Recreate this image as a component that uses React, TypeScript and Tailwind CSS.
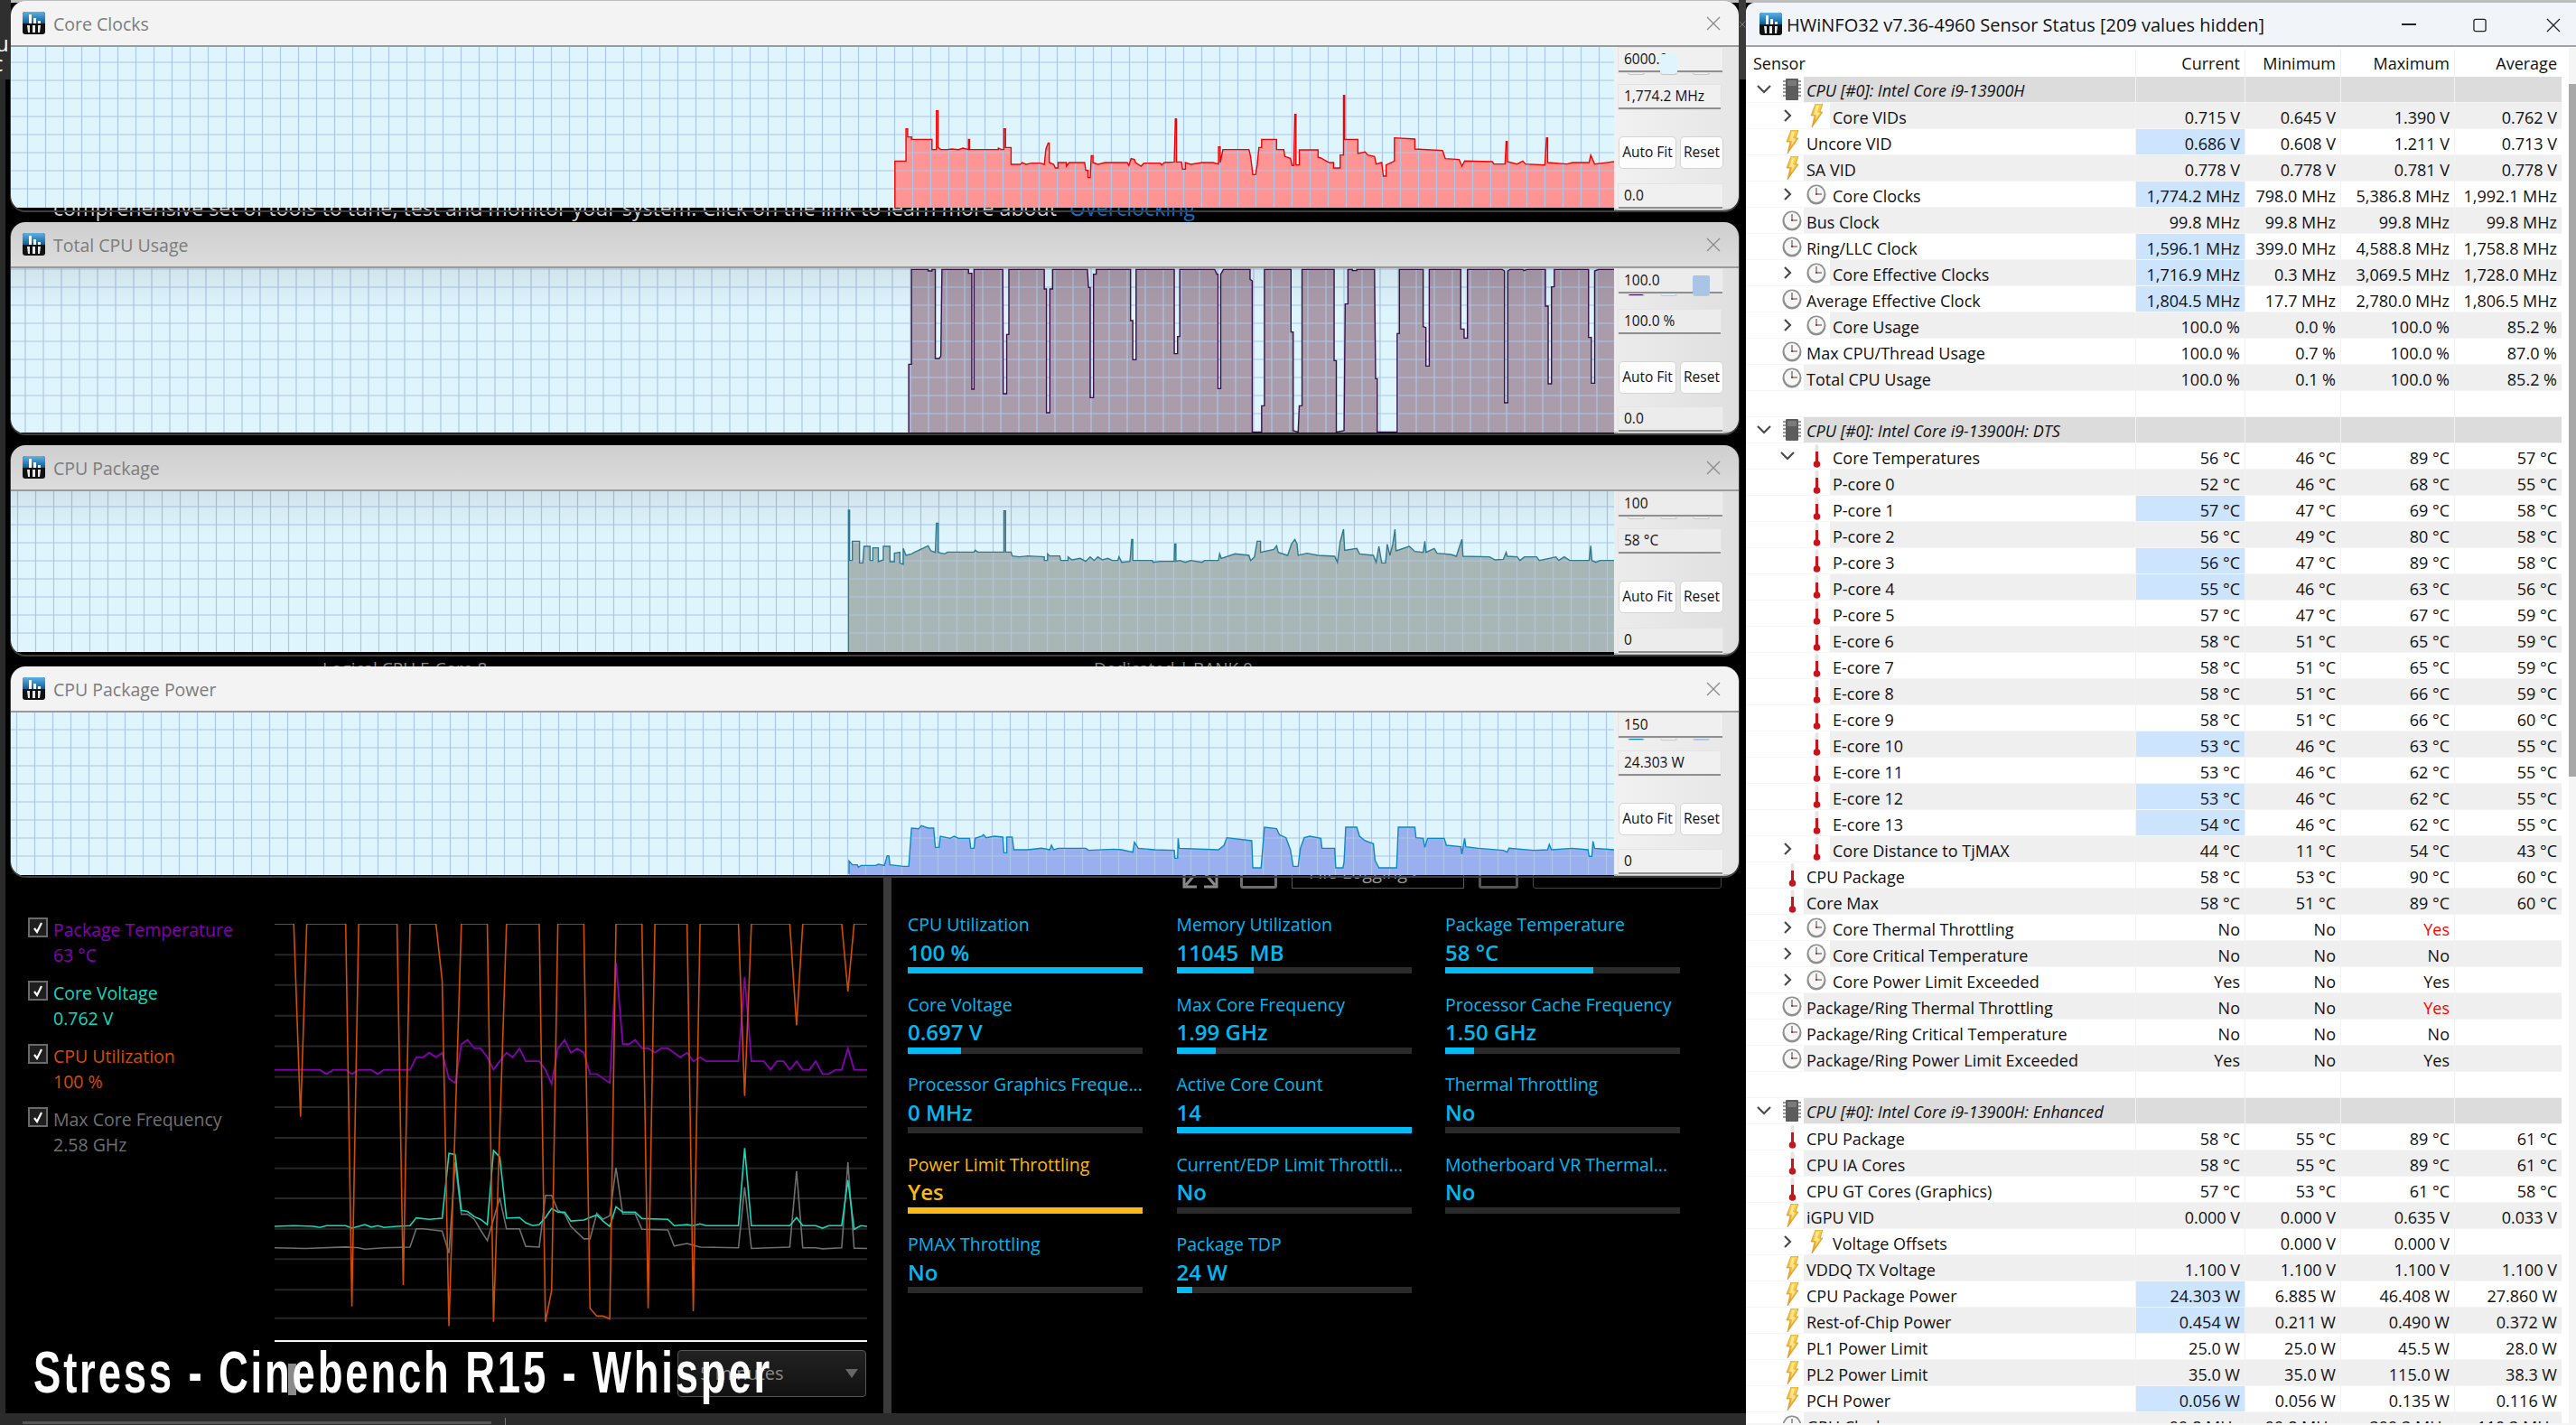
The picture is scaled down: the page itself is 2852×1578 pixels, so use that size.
import React from "react";

const F = "font-['Open_Sans',sans-serif]";

const clocks = "-15,690 -15,535 5,535 5,428 8,428 8,455 15,455 15,463 52,463 52,497 60,497 60,368 63,368 63,490 68,497 80,497 88,495 100,497 108,492 118,497 118,463 120,463 120,497 172,497 172,492 178,497 182,497 182,428 185,428 185,490 195,490 195,546 212,546 215,540 222,546 232,542 248,542 255,546 258,495 262,475 264,475 264,540 272,546 275,558 280,558 280,540 295,540 295,552 300,540 328,540 330,566 334,566 334,590 338,590 340,517 343,517 343,540 352,546 365,540 405,540 408,550 412,527 418,530 420,540 430,552 435,542 465,542 467,548 472,540 490,538 492,395 494,395 494,538 503,538 505,562 510,562 510,540 520,546 540,540 560,540 570,545 570,488 573,488 573,540 578,497 625,497 628,520 632,580 637,580 640,548 643,490 648,490 648,463 675,463 675,497 688,497 690,520 700,526 703,550 706,550 708,380 710,380 710,548 716,548 716,498 750,498 750,522 755,525 770,540 778,540 778,558 790,558 790,515 796,515 796,317 798,317 798,463 822,463 822,510 835,505 840,515 852,520 855,545 865,540 868,585 873,585 873,548 888,535 888,458 925,462 925,495 975,500 980,527 1005,530 1010,552 1015,535 1065,537 1068,545 1088,545 1090,470 1092,470 1092,537 1110,545 1120,535 1125,545 1160,548 1163,458 1165,458 1165,540 1200,545 1210,540 1240,540 1243,515 1250,545 1285,537";
const usage = "10,1433 10,1207 15,1207 15,892 45,892 45,897 52,897 52,892 58,892 58,1188 65,1188 68,1180 70,892 118,892 118,905 124,905 124,1290 128,1290 128,892 180,892 181,1305 187,1305 187,1108 191,1108 191,892 255,892 255,957 259,957 259,1368 265,1368 265,957 270,957 270,892 333,892 335,952 338,952 338,1318 344,1318 344,908 349,908 349,892 411,892 411,1062 415,1062 415,1192 421,1192 421,892 490,892 490,1172 496,1172 496,1115 500,1115 500,892 563,892 567,908 569,908 569,1288 574,1288 574,908 579,892 627,892 627,925 631,930 631,1432 648,1432 648,1345 653,1345 653,892 701,892 701,1100 705,1100 705,1428 714,1432 716,1345 721,1345 721,892 779,892 779,1195 783,1195 783,1432 797,1428 799,1007 804,1007 804,892 812,892 812,896 820,896 820,892 852,892 854,1255 857,1255 857,1432 893,1432 893,1105 897,1105 897,892 940,892 940,1082 945,1085 945,1213 951,1213 951,892 1008,892 1008,1090 1014,1090 1014,1120 1020,1120 1020,892 1083,892 1087,897 1087,1335 1093,1335 1093,897 1097,892 1120,892 1122,896 1128,892 1161,892 1161,1014 1166,1014 1166,1272 1172,1272 1172,950 1177,950 1177,892 1239,892 1239,1118 1244,1118 1244,1270 1250,1270 1250,897 1257,892 1285,892";
const pkg = "-99,695 -99,225 -97,225 -97,392 -92,392 -92,328 -79,328 -79,400 -73,400 -71,345 -60,345 -60,392 -55,392 -55,350 -45,350 -45,396 -36,390 -36,345 -24,345 -24,396 -16,396 -16,368 -6,365 -6,400 0,405 0,352 5,375 15,370 20,365 35,352 45,343 50,360 58,365 60,268 63,268 63,365 75,370 80,364 128,364 130,358 135,364 182,364 182,227 185,227 185,364 195,364 197,377 210,380 225,377 255,380 255,392 261,392 261,370 265,377 283,377 285,392 298,392 298,380 305,390 320,385 330,395 338,380 345,392 352,380 360,390 370,385 378,392 388,392 390,380 395,398 410,395 413,322 415,322 415,392 450,392 452,398 465,395 490,395 491,337 493,337 493,395 500,392 510,398 520,392 540,398 545,392 570,392 572,370 575,385 600,370 625,375 628,392 635,380 640,328 646,328 646,365 670,355 675,343 678,365 695,375 702,337 708,322 712,337 714,375 730,368 750,375 780,378 785,398 790,330 796,288 798,358 820,352 825,370 850,375 855,398 860,345 865,400 872,400 875,338 880,375 885,338 889,288 891,360 915,345 925,362 940,365 943,328 945,365 960,352 965,368 990,372 1000,378 1010,322 1012,378 1060,380 1070,390 1085,388 1090,365 1092,378 1110,380 1115,392 1123,380 1145,380 1150,392 1180,380 1185,392 1195,380 1205,392 1240,392 1243,343 1245,392 1252,398 1260,392 1285,392";
const power = "-98,1430 -98,1387 -92,1400 -83,1400 -81,1408 -76,1402 -50,1402 -45,1398 -34,1402 -29,1370 -26,1370 -24,1400 -13,1402 0,1405 10,1405 15,1278 28,1280 33,1270 45,1278 55,1278 58,1342 65,1342 67,1305 85,1312 92,1305 100,1312 120,1312 122,1345 128,1345 130,1312 142,1305 145,1300 150,1310 165,1305 180,1308 182,1360 187,1360 187,1308 197,1308 200,1350 225,1350 250,1345 265,1350 268,1335 272,1350 280,1345 330,1345 335,1352 380,1348 395,1350 415,1358 418,1325 425,1345 455,1350 490,1352 491,1378 496,1378 497,1312 499,1345 570,1350 580,1335 585,1310 630,1320 632,1410 647,1410 653,1275 675,1280 680,1300 692,1310 700,1350 705,1405 714,1405 718,1345 725,1310 735,1305 755,1312 757,1345 780,1345 782,1410 795,1410 797,1390 800,1275 820,1275 825,1305 835,1320 850,1330 853,1385 860,1410 892,1410 895,1275 925,1275 927,1310 940,1312 943,1342 948,1312 978,1312 982,1335 1008,1340 1010,1365 1015,1312 1017,1340 1040,1345 1085,1352 1092,1358 1095,1345 1140,1352 1165,1350 1168,1332 1172,1350 1210,1345 1238,1350 1240,1372 1245,1372 1247,1322 1250,1345 1285,1350";

const orange = "486,160 520,160 532,702 543,160 612,160 623,1235 635,160 703,160 714,1175 726,160 772,160 783,320 795,1290 817,160 863,160 874,1278 897,160 955,160 966,1278 977,1190 988,160 1034,160 1045,1240 1057,1262 1068,1262 1080,1270 1091,160 1137,160 1148,1240 1160,160 1217,160 1228,1248 1240,160 1308,160 1319,644 1331,160 1399,160 1411,445 1422,160 1491,160 1502,350 1513,160 1536,160";
const purple = "486,570 566,570 578,582 590,570 612,570 623,582 635,570 657,570 669,582 680,570 726,570 737,535 749,535 760,522 772,535 783,522 795,595 806,607 817,498 828,486 840,510 851,510 863,535 874,570 885,546 897,522 908,535 920,510 931,546 955,546 966,570 977,610 988,510 1000,486 1011,522 1022,510 1034,522 1045,582 1057,582 1080,607 1091,270 1103,498 1114,498 1125,486 1137,510 1148,510 1160,522 1171,510 1183,510 1194,522 1205,535 1217,522 1228,546 1240,535 1251,546 1308,546 1319,310 1331,546 1353,546 1365,570 1376,546 1388,546 1399,570 1411,546 1422,570 1434,570 1445,546 1457,582 1468,582 1480,570 1491,570 1502,510 1513,570 1536,570";
const teal = "486,1010 520,1008 555,1010 566,1013 578,1008 612,1008 623,1015 635,1010 646,1005 657,1012 669,1008 680,1013 703,1010 726,1008 737,986 760,990 783,987 795,805 806,808 817,965 828,968 840,983 851,990 863,1005 874,797 885,815 897,987 920,985 931,1000 944,1008 955,1005 966,985 977,960 988,970 1000,970 1011,995 1034,992 1045,985 1057,978 1068,995 1080,1010 1091,955 1103,970 1125,970 1137,988 1183,990 1194,1008 1217,1005 1228,1008 1240,1003 1251,1008 1308,1008 1319,790 1331,1008 1399,1008 1411,985 1422,1008 1445,1008 1457,1015 1468,1008 1491,1008 1502,880 1513,1018 1525,1008 1536,1010";
const grey = "486,1070 540,1072 612,1068 635,1070 646,1074 680,1070 726,1068 737,1017 749,1017 783,1023 795,1085 806,830 817,976 828,976 840,990 851,1020 863,1050 885,930 897,1017 920,1017 931,1066 955,1068 966,923 977,923 988,965 1000,975 1011,1010 1034,1045 1045,1045 1057,973 1068,990 1080,980 1091,845 1103,975 1125,975 1137,1018 1183,1020 1194,1065 1217,1058 1240,1068 1308,1070 1319,900 1331,1072 1399,1068 1411,855 1422,1070 1445,1070 1457,1073 1491,1070 1502,830 1513,1071 1536,1072";

function HwIcon({ cls }: { cls: string }) {
  return (
    <svg viewBox="0 0 25 25" className={cls}>
      <rect width="25" height="25" rx="3" fill="#111" />
      <defs>
        <linearGradient id="hwi" x1="0" y1="0" x2="0" y2="1">
          <stop offset="0" stopColor="#5fb2e6" />
          <stop offset="1" stopColor="#0b5d96" />
        </linearGradient>
      </defs>
      <path d="M0 3a3 3 0 0 1 3-3h19a3 3 0 0 1 3 3v10H0z" fill="url(#hwi)" />
      <path d="M7 3h3v10H7zM12 7h3v6h-3zM17 10h3v3h-3z" fill="#fff" />
      <path d="M5 15h3v8H6zM11 15h3v8h-3zM17 15h3l-1 8h-2z" fill="#e8e8e8" />
    </svg>
  );
}

function X({ cls, color }: { cls: string; color: string }) {
  return (
    <svg viewBox="0 0 16 16" className={cls} fill="none" stroke={color} strokeWidth="1.3">
      <path d="M1 1l14 14M15 1L1 15" />
    </svg>
  );
}

type W = {
  pos: string;
  title: string;
  titleBg: string;
  panelBg: string;
  boxBg: string;
  plotH: string;
  plotTop: number;
  h: number;
  offX: number;
  data: string;
  yo: number;
  fill: string;
  stroke: string;
  shade: boolean;
  max: string;
  cur: string;
  min: string;
  gap: string;
  sw: string[];
  big: number;
};

const windows: W[] = [
  { pos: "top-[1px] h-[232px]", title: "Core Clocks", titleBg: "bg-[#f3f3f3]", panelBg: "bg-linear-to-r from-[#f1f1f1] to-[#e6e6e6]", boxBg: "bg-[#f0f0f0]", plotH: "h-[178px]", plotTop: 52, h: 178, offX: 10.5, data: clocks, yo: 0, fill: "#ff9494", stroke: "#f00000", shade: false, max: "6000.0", cur: "1,774.2 MHz", min: "0.0", gap: "mt-[11px]", sw: ["#f0f0f0", "#dff5fd", "#f0f0f0"], big: 1 },
  { pos: "top-[246px] h-[234px]", title: "Total CPU Usage", titleBg: "bg-linear-to-b from-[#cfcfcf] to-[#dcdcdc]", panelBg: "bg-linear-to-r from-[#ececec] to-[#dfdfdf]", boxBg: "bg-[#ececec]", plotH: "h-[182px]", plotTop: 296, h: 182, offX: 8, data: usage, yo: 0, fill: "#ab9cab", stroke: "#38104a", shade: true, max: "100.0", cur: "100.0 %", min: "0.0", gap: "mt-[15px]", sw: ["#3c0a52", "#dff5fd", "#a9c4e4"], big: 2 },
  { pos: "top-[493px] h-[232px]", title: "CPU Package", titleBg: "bg-linear-to-b from-[#cfcfcf] to-[#dcdcdc]", panelBg: "bg-linear-to-r from-[#ececec] to-[#dfdfdf]", boxBg: "bg-[#ececec]", plotH: "h-[178px]", plotTop: 544, h: 178, offX: 19.5, data: pkg, yo: 490, fill: "#a8b6b6", stroke: "#2f7a92", shade: true, max: "100", cur: "58 °C", min: "0", gap: "mt-[11px]", sw: ["#f0f0f0", "#f0f0f0", "#f0f0f0"], big: -1 },
  { pos: "top-[738px] h-[232px]", title: "CPU Package Power", titleBg: "bg-[#f3f3f3]", panelBg: "bg-linear-to-r from-[#f1f1f1] to-[#e6e6e6]", boxBg: "bg-[#f0f0f0]", plotH: "h-[180px]", plotTop: 788, h: 180, offX: 18.5, data: power, yo: 490, fill: "#9ab0ee", stroke: "#0a8abf", shade: false, max: "150", cur: "24.303 W", min: "0", gap: "mt-[12px]", sw: ["#0a8abf", "#f4f4f4", "#a9c4e4"], big: -1 },
];

function Plot({ w, i }: { w: W; i: number }) {
  let d = "";
  for (let x = w.offX; x < 1787; x += 20) d += `M${x} ${w.plotTop}V${w.plotTop + w.h}`;
  for (let y = w.plotTop + w.h - 21; y > w.plotTop; y -= 20) d += `M12 ${y}H1787`;
  const first = w.data.split(" ")[0].split(",")[0];
  const last = w.data.split(" ").slice(-1)[0].split(",")[0];
  const base = w.yo === 0 ? (w.plotTop + w.h) * 3 : (w.plotTop + w.h - 490) * 3;
  const poly = `${first},${base} ${w.data} ${last},${base}`;
  const tr = `translate(1000 ${w.yo}) scale(0.6124 0.33333)`;
  return (
    <svg viewBox={`12 ${w.plotTop} 1775 ${w.h}`} preserveAspectRatio="none" className={`block w-[1775px] ${w.plotH} shrink-0`}>
      <defs>
        <linearGradient id={`sh${i}`} x1="0" y1="0" x2="0" y2="1">
          <stop offset="0" stopColor="#000" stopOpacity="0.07" />
          <stop offset="1" stopColor="#000" stopOpacity="0" />
        </linearGradient>
      </defs>
      <rect x="12" y={w.plotTop} width="1775" height={w.h} fill="#dff5fd" />
      <polygon points={poly} fill={w.fill} transform={tr} />
      <path d={d} stroke="#abc6e6" strokeWidth="1.2" fill="none" />
      <polyline points={w.data} fill="none" stroke={w.stroke} strokeWidth="1.4" vectorEffect="non-scaling-stroke" transform={tr} />
      {w.shade && <rect x="12" y={w.plotTop} width="1775" height="50" fill={`url(#sh${i})`} />}
    </svg>
  );
}

function Box({ cls, text, bg }: { cls: string; text: string; bg: string }) {
  return (
    <div className={`${cls} ${bg} h-[27px] shrink-0 border-b-2 border-[#8f8f8f] pl-[6px] flex items-center text-[#111] text-[15.5px] leading-none shadow-[0_0_0_1px_#e4e4e4]`}>
      {text}
    </div>
  );
}

function GraphWindow({ w, i }: { w: W; i: number }) {
  return (
    <div className={`absolute left-[12px] w-[1913px] ${w.pos} rounded-[16px] overflow-hidden flex flex-col shadow-[0_1px_0_1px_#3d3d3d] z-10 ${F}`}>
      <div className={`${w.titleBg} h-[51px] shrink-0 border-b-2 border-[#9a9a9a] flex items-center pl-[13px] pr-[20px]`}>
        <HwIcon cls="w-[25px] h-[25px]" />
        <span className="ml-[9px] pt-[2px] text-[#7c7c7c] text-[19.5px]">{w.title}</span>
        <X cls="ml-auto w-[16px] h-[16px]" color="#8a8a8a" />
      </div>
      <div className="flex flex-1 min-h-0">
        <Plot w={w} i={i} />
        <div className={`${w.panelBg} flex-1 pl-[5px] flex flex-col border-b-2 border-[#b8b8b8] relative`}>
          <Box cls="w-[115px] relative z-10 mt-[1px]" text={w.max} bg={w.boxBg} />
          <div className="flex justify-between w-[91px] ml-[10px] h-[3px] shrink-0">
            {w.sw.map((c, k) => (
              <span key={k} className="w-[19px] h-[3px] rounded-b-[3px] border border-t-0 border-[#c6c6c6] relative" style={{ background: c }}>
                {k === w.big && <span className="absolute -top-[20px] -left-[1px] w-[19px] h-[21px] rounded-[2px] z-20" style={{ background: c }} />}
              </span>
            ))}
          </div>
          <Box cls={`w-[113px] ${w.gap}`} text={w.cur} bg={w.boxBg} />
          <div className="flex gap-[4px] mt-[30px] shrink-0">
            <div className="w-[64px] h-[36px] rounded-[5px] bg-[#fdfdfd] border border-[#d4d4d4] flex items-center justify-center text-[#111] text-[15.5px] leading-none">Auto Fit</div>
            <div className="w-[48px] h-[36px] rounded-[5px] bg-[#fdfdfd] border border-[#d4d4d4] flex items-center justify-center text-[#111] text-[15.5px] leading-none">Reset</div>
          </div>
          <Box cls="w-[115px] mt-auto" text={w.min} bg={w.boxBg} />
        </div>
      </div>
    </div>
  );
}

function Volt({ cls = "" }: { cls?: string }) {
  return (
    <svg viewBox="0 0 14 26" className={`w-[14px] h-[26px] ${cls}`}>
      <defs>
        <linearGradient id="vg" x1="0" y1="0" x2="0" y2="1">
          <stop offset="0" stopColor="#fcd649" />
          <stop offset="1" stopColor="#ef9a13" />
        </linearGradient>
      </defs>
      <path d="M6 0h8l-3 9h3L2 26l3-13H1z" fill="url(#vg)" stroke="#c9851b" strokeWidth="0.6" />
      <path d="M7 2h3L8 9l3 1-5 8 1-6H4z" fill="#fff3b5" opacity="0.7" />
    </svg>
  );
}
function Clock() {
  return (
    <svg viewBox="0 0 22 24" className="w-[22px] h-[24px]">
      <ellipse cx="11" cy="12.5" rx="10.5" ry="11" fill="#8f8f8f" />
      <ellipse cx="11" cy="12" rx="8.5" ry="9" fill="#f6f6f6" />
      <path d="M11 12V5M11 12h6" stroke="#444" strokeWidth="1" fill="none" />
      <circle cx="11" cy="12" r="1.1" fill="#b02020" />
    </svg>
  );
}
function Therm() {
  return (
    <svg viewBox="0 0 9 26" className="w-[9px] h-[26px]">
      <rect x="2.5" y="0" width="4" height="22" rx="2" fill="#e9e4e4" />
      <rect x="3" y="8" width="3" height="14" fill="#c4161c" />
      <circle cx="4.5" cy="22" r="3.8" fill="#c4161c" />
    </svg>
  );
}
function Chip() {
  return (
    <svg viewBox="0 0 20 24" className="w-[20px] h-[24px]">
      <rect x="3" y="0" width="14" height="24" rx="1" fill="#5c5c5c" />
      <path d="M0 3h3M0 7h3M0 11h3M0 15h3M0 19h3M17 3h3M17 7h3M17 11h3M17 15h3M17 19h3" stroke="#9c9c9c" strokeWidth="2" />
      <rect x="5" y="2" width="10" height="6" fill="#7a7a7a" />
    </svg>
  );
}
function ChevR() {
  return (
    <svg viewBox="0 0 10 14" className="w-[10px] h-[14px]" fill="none" stroke="#4a4a4a" strokeWidth="2.2">
      <path d="M2 1l6 6-6 6" />
    </svg>
  );
}
function ChevD() {
  return (
    <svg viewBox="0 0 16 10" className="w-[16px] h-[10px]" fill="none" stroke="#4a4a4a" strokeWidth="2.2">
      <path d="M1 1l7 7 7-7" />
    </svg>
  );
}

type Row = { t: "g" | "0" | "1" | "e"; n?: string; ic?: "v" | "c" | "h"; ch?: "r" | "d"; v?: string[]; hi?: boolean; red?: boolean };
const mk = (t: Row["t"], ic: Row["ic"], n: string, v: string, opts: Partial<Row> = {}): Row => ({ t, ic, n, v: v.split("|"), ...opts });
const G = (n: string): Row => ({ t: "g", n });
const E: Row = { t: "e" };
const hi = { hi: true };
const temp = (n: string, a: string, b: string, c: string, d: string, o: Partial<Row> = {}) => mk("1", "h", n, `${a} °C|${b} °C|${c} °C|${d} °C`, o);
const temp0 = (n: string, a: string, b: string, c: string, d: string) => mk("0", "h", n, `${a} °C|${b} °C|${c} °C|${d} °C`);

const rows: Row[] = [
  G("CPU [#0]: Intel Core i9-13900H"),
  mk("1", "v", "Core VIDs", "0.715 V|0.645 V|1.390 V|0.762 V", { ch: "r" }),
  mk("0", "v", "Uncore VID", "0.686 V|0.608 V|1.211 V|0.713 V", hi),
  mk("0", "v", "SA VID", "0.778 V|0.778 V|0.781 V|0.778 V"),
  mk("1", "c", "Core Clocks", "1,774.2 MHz|798.0 MHz|5,386.8 MHz|1,992.1 MHz", { ch: "r", hi: true }),
  mk("0", "c", "Bus Clock", "99.8 MHz|99.8 MHz|99.8 MHz|99.8 MHz"),
  mk("0", "c", "Ring/LLC Clock", "1,596.1 MHz|399.0 MHz|4,588.8 MHz|1,758.8 MHz", hi),
  mk("1", "c", "Core Effective Clocks", "1,716.9 MHz|0.3 MHz|3,069.5 MHz|1,728.0 MHz", { ch: "r", hi: true }),
  mk("0", "c", "Average Effective Clock", "1,804.5 MHz|17.7 MHz|2,780.0 MHz|1,806.5 MHz", hi),
  mk("1", "c", "Core Usage", "100.0 %|0.0 %|100.0 %|85.2 %", { ch: "r" }),
  mk("0", "c", "Max CPU/Thread Usage", "100.0 %|0.7 %|100.0 %|87.0 %"),
  mk("0", "c", "Total CPU Usage", "100.0 %|0.1 %|100.0 %|85.2 %"),
  E,
  G("CPU [#0]: Intel Core i9-13900H: DTS"),
  temp("Core Temperatures", "56", "46", "89", "57", { ch: "d" }),
  temp("P-core 0", "52", "46", "68", "55"),
  temp("P-core 1", "57", "47", "69", "58", hi),
  temp("P-core 2", "56", "49", "80", "58"),
  temp("P-core 3", "56", "47", "89", "58", hi),
  temp("P-core 4", "55", "46", "63", "56", hi),
  temp("P-core 5", "57", "47", "67", "59"),
  temp("E-core 6", "58", "51", "65", "59"),
  temp("E-core 7", "58", "51", "65", "59"),
  temp("E-core 8", "58", "51", "66", "59"),
  temp("E-core 9", "58", "51", "66", "60"),
  temp("E-core 10", "53", "46", "63", "55", hi),
  temp("E-core 11", "53", "46", "62", "55"),
  temp("E-core 12", "53", "46", "62", "55", hi),
  temp("E-core 13", "54", "46", "62", "55", hi),
  temp("Core Distance to TjMAX", "44", "11", "54", "43", { ch: "r" }),
  temp0("CPU Package", "58", "53", "90", "60"),
  temp0("Core Max", "58", "51", "89", "60"),
  mk("1", "c", "Core Thermal Throttling", "No|No|Yes|", { ch: "r", red: true }),
  mk("1", "c", "Core Critical Temperature", "No|No|No|", { ch: "r" }),
  mk("1", "c", "Core Power Limit Exceeded", "Yes|No|Yes|", { ch: "r" }),
  mk("0", "c", "Package/Ring Thermal Throttling", "No|No|Yes|", { red: true }),
  mk("0", "c", "Package/Ring Critical Temperature", "No|No|No|"),
  mk("0", "c", "Package/Ring Power Limit Exceeded", "Yes|No|Yes|"),
  E,
  G("CPU [#0]: Intel Core i9-13900H: Enhanced"),
  temp0("CPU Package", "58", "55", "89", "61"),
  temp0("CPU IA Cores", "58", "55", "89", "61"),
  temp0("CPU GT Cores (Graphics)", "57", "53", "61", "58"),
  mk("0", "v", "iGPU VID", "0.000 V|0.000 V|0.635 V|0.033 V"),
  mk("1", "v", "Voltage Offsets", "|0.000 V|0.000 V|", { ch: "r" }),
  mk("0", "v", "VDDQ TX Voltage", "1.100 V|1.100 V|1.100 V|1.100 V"),
  mk("0", "v", "CPU Package Power", "24.303 W|6.885 W|46.408 W|27.860 W", hi),
  mk("0", "v", "Rest-of-Chip Power", "0.454 W|0.211 W|0.490 W|0.372 W", hi),
  mk("0", "v", "PL1 Power Limit", "25.0 W|25.0 W|45.5 W|28.0 W"),
  mk("0", "v", "PL2 Power Limit", "35.0 W|35.0 W|115.0 W|38.3 W"),
  mk("0", "v", "PCH Power", "0.056 W|0.056 W|0.135 W|0.116 W", hi),
  mk("0", "c", "GPU Clock", "99.8 MHz|99.8 MHz|399.3 MHz|110.3 MHz"),
];

const cellW = ["w-[121px]", "w-[106px]", "w-[126px]", "w-[119px]"];

function Icon({ k }: { k?: Row["ic"] }) {
  if (k === "v") return <Volt />;
  if (k === "c") return <Clock />;
  if (k === "h") return <Therm />;
  return null;
}

function SensorRow({ r, odd }: { r: Row; odd: boolean }) {
  const bg = r.t === "g" ? "bg-[#dcdcdc]" : odd ? "bg-[#efefef]" : "bg-white";
  const gut = r.t === "1" ? "w-[93px]" : "w-[64px]";
  return (
    <div className="flex h-[29px] shrink-0">
      <div className="flex w-[431px] shrink-0 border-b border-[#f6f6f6]">
        <div className={`${gut} shrink-0 flex items-center`}>
          {r.t === "g" && (
            <>
              <span className="w-[40px] flex justify-center"><ChevD /></span>
              <span className="w-[22px] flex justify-center"><Chip /></span>
            </>
          )}
          {r.t === "0" && (
            <span className="ml-[40px] w-[22px] flex justify-center"><Icon k={r.ic} /></span>
          )}
          {r.t === "1" && (
            <>
              <span className="ml-[36px] w-[20px] flex justify-center">{r.ch === "r" ? <ChevR /> : r.ch === "d" ? <ChevD /> : null}</span>
              <span className="ml-[11px] w-[22px] flex justify-center"><Icon k={r.ic} /></span>
            </>
          )}
        </div>
        <div className={`flex-1 ${bg} pl-[3px] ${r.t === "g" ? "pt-[1px] italic" : "pt-[3px]"} flex items-center text-[#111] text-[18px] leading-none whitespace-nowrap`}>{r.n}</div>
      </div>
      {cellW.map((c, k) => {
        const val = r.v ? r.v[k] : "";
        const cellBg = r.hi && k === 0 ? "bg-[#cde4ff]" : bg;
        const col = r.red && k === 2 ? "text-[#ff0000]" : "text-[#111]";
        return (
          <div key={k} className={`${c} shrink-0 ${cellBg} ${col} border-l border-[#f2f2f2] border-b border-b-[#f6f6f6] pr-[5px] pt-[3px] flex items-center justify-end text-[18px] leading-none whitespace-nowrap`}>{val}</div>
        );
      })}
    </div>
  );
}

function SensorWindow() {
  return (
    <div className={`absolute left-[1933px] top-[3px] right-0 bottom-0 bg-white overflow-hidden flex flex-col z-10 rounded-tl-[10px] ${F}`}>
      <div className="h-[49px] shrink-0 bg-[#f1f5f9] border-b-2 border-[#9fa3a8] flex items-center pl-[15px]">
        <HwIcon cls="w-[25px] h-[25px]" />
        <span className="ml-[5px] pt-[2px] text-[#111] text-[20px] whitespace-nowrap">HWiNFO32 v7.36-4960 Sensor Status [209 values hidden]</span>
        <svg viewBox="0 0 16 2" className="absolute left-[726px] top-[23px] w-[16px] h-[2px]"><rect width="16" height="2" fill="#222" /></svg>
        <svg viewBox="0 0 16 16" className="absolute left-[805px] top-[17px] w-[15px] h-[16px]" fill="none" stroke="#222" strokeWidth="1.4"><rect x="1" y="1" width="14" height="14" rx="2" /></svg>
        <X cls="absolute left-[886px] top-[17px] w-[16px] h-[16px]" color="#222" />
      </div>
      <div className="flex h-[33px] shrink-0 text-[#111] text-[18px] leading-none pt-[3px]">
        <div className="w-[431px] pl-[8px] flex items-center">Sensor</div>
        {["Current", "Minimum", "Maximum", "Average"].map((h, k) => (
          <div key={h} className={`${cellW[k]} border-l border-[#eeeeee] pr-[5px] flex items-center justify-end`}>{h}</div>
        ))}
      </div>
      {rows.map((r, i) => (
        <SensorRow key={i} r={r} odd={i % 2 === 1} />
      ))}
      <div className="absolute right-0 top-[50px] w-[8px] bottom-0 bg-[#f5f5f5]">
        <div className="mt-[40px] h-[767px] bg-[#a8a8a8]" />
      </div>
      <div className="absolute left-0 right-0 bottom-0 h-[2px] bg-[#f5f5f5]" />
    </div>
  );
}

const legend = [
  { c: "text-[#8500b3]", n: "Package Temperature", v: "63 °C" },
  { c: "text-[#14d8bb]", n: "Core Voltage", v: "0.762 V" },
  { c: "text-[#d34c00]", n: "CPU Utilization", v: "100 %" },
  { c: "text-[#707070]", n: "Max Core Frequency", v: "2.58 GHz" },
];

function Legend() {
  return (
    <div className="w-[273px] shrink-0 flex flex-col">
      {legend.map((l) => (
        <div key={l.n} className={`h-[70px] flex ${l.c} text-[19.5px] leading-[28px]`}>
          <div className="w-[22px] h-[22px] border-2 border-[#6a6a6a] bg-[#1f1f1f] flex items-center justify-center shrink-0">
            <svg viewBox="0 0 14 14" className="w-[14px] h-[14px]" fill="none" stroke="#fff" strokeWidth="2.2"><path d="M3 8l3 4 5-10" /></svg>
          </div>
          <div className="ml-[6px] whitespace-nowrap">
            <div>{l.n}</div>
            <div>{l.v}</div>
          </div>
        </div>
      ))}
    </div>
  );
}

function MonitorChart() {
  const ys = [247, 332, 418, 504, 590, 675, 761, 847, 931, 1017, 1102, 1188, 1268];
  return (
    <svg viewBox="486 160 1050 1205" preserveAspectRatio="none" className="w-[656px] h-[475px] mt-[7px] shrink-0 block">
      {ys.map((y) => (
        <line key={y} x1="486" x2="1536" y1={y} y2={y} stroke="#262626" strokeWidth="2" vectorEffect="non-scaling-stroke" />
      ))}
      <line x1="486" x2="1536" y1="1332" y2="1332" stroke="#f4f4f4" strokeWidth="2" vectorEffect="non-scaling-stroke" />
      <polyline points={grey} fill="none" stroke="#6e6e6e" strokeWidth="1.6" vectorEffect="non-scaling-stroke" />
      <polyline points={teal} fill="none" stroke="#14d8bb" strokeWidth="1.6" vectorEffect="non-scaling-stroke" />
      <polyline points={purple} fill="none" stroke="#8500b3" strokeWidth="1.8" vectorEffect="non-scaling-stroke" />
      <polyline points={orange} fill="none" stroke="#d34c00" strokeWidth="1.6" vectorEffect="non-scaling-stroke" />
    </svg>
  );
}

const cards = [
  { l: "CPU Utilization", v: "100 %", p: 100 },
  { l: "Memory Utilization", v: "11045  MB", p: 33 },
  { l: "Package Temperature", v: "58 °C", p: 63 },
  { l: "Core Voltage", v: "0.697 V", p: 22.6 },
  { l: "Max Core Frequency", v: "1.99 GHz", p: 16.8 },
  { l: "Processor Cache Frequency", v: "1.50 GHz", p: 12.3 },
  { l: "Processor Graphics Freque...", v: "0 MHz", p: 0 },
  { l: "Active Core Count", v: "14", p: 100 },
  { l: "Thermal Throttling", v: "No", p: 0 },
  { l: "Power Limit Throttling", v: "Yes", p: 100, y: true },
  { l: "Current/EDP Limit Throttli...", v: "No", p: 0 },
  { l: "Motherboard VR Thermal...", v: "No", p: 0 },
  { l: "PMAX Throttling", v: "No", p: 0 },
  { l: "Package TDP", v: "24 W", p: 6.6 },
];

function Card({ c }: { c: (typeof cards)[number] }) {
  const tone = c.y ? "text-[#fdb813]" : "text-[#00b8f0]";
  const fill = c.y ? "bg-[#fdb813]" : "bg-[#00bdf7]";
  return (
    <div className="w-[260px]">
      <div className={`${tone} h-[28px] flex items-center text-[19.5px] whitespace-pre leading-none`}>{c.l}</div>
      <div className={`${tone} h-[33px] flex items-center text-[24px] font-semibold whitespace-pre leading-none`}>{c.v}</div>
      <div className="h-[7px] bg-[#2b2b2b]">
        <div className={`h-full ${fill}`} style={{ width: `${c.p}%` }} />
      </div>
    </div>
  );
}

function Backdrop() {
  return (
    <>
      <div className="absolute left-[12px] top-0 right-0 h-[3px] bg-[#bdbdbd]" />
      <div className="absolute left-0 top-0 w-[12px] h-[88px] bg-[#2f2f2f] overflow-hidden text-white text-[24px] leading-none">
        <span className="absolute -left-[5px] top-[36px]">ul</span>
        <span className="absolute -left-[8px] top-[58px]">c</span>
      </div>
      <div className="absolute left-0 top-[88px] w-[6px] bottom-0 bg-[#2a2a2a]" />
      <div className="absolute left-[1925px] top-0 w-[8px] h-[88px] bg-[#3a3a3a] overflow-hidden">
        <X cls="absolute left-[0px] top-[22px] w-[8px] h-[10px]" color="#9a9a9a" />
      </div>
      <div className="absolute left-[59px] top-[216px] whitespace-nowrap text-[23.2px] leading-[28px] text-[#d0d0d0]">
        comprehensive set of tools to tune, test and monitor your system. Click on the link to learn more about <span className="ml-[8px] text-[#0a70c8]">Overclocking</span>
      </div>
      <div className="absolute left-[255px] top-[460px] text-[19px] leading-[24px] text-[#8a8a8a] whitespace-nowrap">Processor</div>
      <div className="absolute left-[357px] top-[728px] text-[19px] leading-[24px] text-[#8a8a8a] whitespace-nowrap">Logical CPU E-Core 8</div>
      <div className="absolute left-[1211px] top-[728px] text-[19px] leading-[24px] text-[#8a8a8a] whitespace-nowrap">Dedicated | BANK 0</div>
      <svg viewBox="0 0 44 24" className="absolute left-[1307px] top-[960px] w-[44px] h-[24px]" fill="none" stroke="#8a8a8a" strokeWidth="3">
        <path d="M4 8v14h14M40 8v14H26M6 20l12-14M38 20L26 6" />
      </svg>
      <div className="absolute left-[1373px] top-[955px] w-[41px] h-[29px] border-[3px] border-[#6e6e6e] rounded-[3px]" />
      <div className="absolute left-[1430px] top-[950px] w-[191px] h-[34px] border border-[#555] pl-[18px] text-[20px] leading-[30px] text-[#9a9a9a]">File Logging &gt;</div>
      <div className="absolute left-[1637px] top-[955px] w-[44px] h-[29px] border-[3px] border-[#555] rounded-[3px]" />
      <div className="absolute left-[1697px] top-[950px] w-[209px] h-[34px] border border-[#444] rounded-[3px] pl-[12px] text-[20px] leading-[20px] text-[#9a9a9a]">1000 ms</div>
    </>
  );
}

export default function App() {
  return (
    <div className={`relative w-[2852px] h-[1578px] bg-black overflow-hidden ${F}`}>
      <Backdrop />
      {windows.map((w, i) => (
        <GraphWindow key={w.title} w={w} i={i} />
      ))}
      <SensorWindow />

      <div className="absolute left-0 top-[970px] w-[1933px] bottom-0 flex flex-col">
        <div className="flex flex-1 min-h-0">
          <div className="w-[978px] shrink-0 pl-[31px] pt-[46px] flex items-start relative">
            <Legend />
            <MonitorChart />
            <div className="absolute left-[319px] top-[540px] w-[9px] h-[35px] bg-[#8a8a8a]" />
            <div className="absolute left-[750px] top-[525px] w-[209px] h-[52px] rounded-[4px] border border-[#555] bg-linear-to-b from-[#222] to-[#111] flex items-center pl-[24px] text-[20px] text-[#8a8a8a]">
              5 minutes
              <svg viewBox="0 0 14 10" className="absolute right-[8px] top-[20px] w-[14px] h-[10px]"><path d="M0 0h14L7 10z" fill="#666" /></svg>
            </div>
          </div>
          <div className="w-[9px] shrink-0 bg-[#3a3a3a]" />
          <div className="flex-1 pl-[18px] pt-[40px]">
            <div className="grid grid-cols-[260px_260px_260px] gap-x-[37.5px] gap-y-[20.5px]">
              {cards.map((c) => (
                <Card key={c.l} c={c} />
              ))}
            </div>
          </div>
        </div>
        <div className="h-[13px] shrink-0 bg-[#2b2b2b] relative">
          <div className="absolute left-[25px] top-[9px] w-[519px] h-[3px] bg-[#555]" />
          <div className="absolute left-[559px] top-[5px] w-[1px] h-[8px] bg-[#777]" />
        </div>
      </div>

      <div className="absolute left-[37px] top-[1482px] z-20 origin-left scale-x-[0.71] text-white text-[64px] leading-[76px] font-bold whitespace-pre font-['Liberation_Sans',sans-serif] tracking-[4px]">
        Stress - Cinebench R15 - Whisper
      </div>
    </div>
  );
}
